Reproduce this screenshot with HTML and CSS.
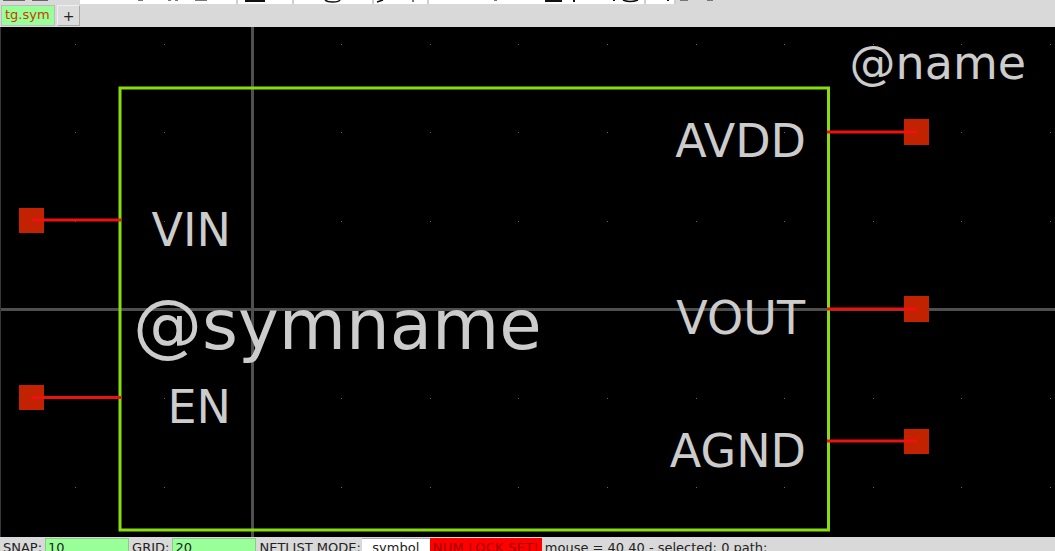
FILE: index.html
```html
<!DOCTYPE html>
<html lang="en">
<head>
    <meta charset="UTF-8">
    <title>xschem - tg.sym</title>
    <link rel="stylesheet" href="styles.css">
</head>
<body>

<div class="toolbar">
    <div class="tool-lead"></div>
    <div class="tool tool-a"></div>
    <div class="tool tool-b"></div>
    <div class="tool tool-c"></div>
    <div class="tool tool-d"></div>
    <div class="tool tool-e"></div>
    <div class="tool tool-f"></div>
    <svg class="tool-icons" width="1055" height="4" viewBox="0 0 1055 4">
        <rect class="ic-grey" x="3" y="0" width="22" height="1"/>
        <rect class="ic-grey" x="32" y="0" width="16" height="1"/>
        <rect class="ic-soft" x="138" y="0" width="5" height="1"/>
        <rect class="ic-soft" x="168" y="0" width="3" height="1"/>
        <rect class="ic-soft" x="175" y="0" width="3" height="1"/>
        <rect class="ic-soft" x="195" y="0" width="12" height="1"/>
        <rect class="ic-dark" x="245" y="0" width="20" height="2"/>
        <path class="ic-line" d="M325 0 Q327 2 333 2 Q339 2 340 0"/>
        <path class="ic-line" d="M377 2 L383 0"/>
        <rect class="ic-soft" x="412" y="0" width="2" height="2"/>
        <rect class="ic-soft" x="494" y="0" width="3" height="1"/>
        <rect class="ic-dark" x="545" y="0" width="17" height="2"/>
        <rect class="ic-dark" x="573" y="0" width="2" height="2"/>
        <rect class="ic-dark" x="613" y="0" width="2" height="1"/>
        <path class="ic-line" d="M623 0 Q630 3 638 0"/>
        <rect class="ic-dark" x="667" y="0" width="2" height="1"/>
        <rect class="ic-soft" x="680" y="0" width="8" height="1"/>
        <rect class="ic-soft" x="707" y="0" width="6" height="1"/>
    </svg>
</div>

<div class="tabbar">
    <span class="tab">tg.sym</span>
    <span class="tab-add">+</span>
</div>

<svg class="canvas" width="1055" height="510" viewBox="0 27 1055 510">
    <g id="dots"></g>

    <line class="axis" x1="252.5" y1="27" x2="252.5" y2="537"/>
    <line class="axis" x1="0" y1="309.5" x2="1055" y2="309.5"/>
    <line class="edge" x1="0.5" y1="27" x2="0.5" y2="537"/>

    <rect class="body" x="120" y="88" width="708.5" height="442"/>

    <rect class="pin" x="19" y="208" width="25" height="25"/>
    <rect class="pin" x="19" y="385" width="25" height="25"/>
    <rect class="pin" x="904" y="119" width="25" height="26"/>
    <rect class="pin" x="904" y="296" width="25" height="26"/>
    <rect class="pin" x="904" y="429" width="25" height="25"/>

    <line class="wire" x1="32" y1="220" x2="121" y2="220"/>
    <line class="wire" x1="32" y1="397.5" x2="121" y2="397.5"/>
    <line class="wire" x1="827" y1="132" x2="917" y2="132"/>
    <line class="wire" x1="827" y1="309" x2="917" y2="309"/>
    <line class="wire" x1="827" y1="441" x2="917" y2="441"/>

    <text class="label" x="1026" y="79" text-anchor="end">@name</text>
    <text class="label" x="806" y="157" text-anchor="end">AVDD</text>
    <text class="label" x="805" y="334" text-anchor="end">VOUT</text>
    <text class="label" x="806" y="467" text-anchor="end">AGND</text>
    <text class="label" x="231" y="246" text-anchor="end">VIN</text>
    <text class="label" x="231" y="423" text-anchor="end">EN</text>
    <text class="label label-big" x="133" y="349">@symname</text>
</svg>

<div class="statusbar">
    <span class="st-label">SNAP:</span>
    <span class="st-input">10</span>
    <span class="st-label">GRID:</span>
    <span class="st-input">20</span>
    <span class="st-label">NETLIST MODE:</span>
    <span class="st-mode">symbol</span>
    <span class="st-warn">NUM LOCK SET!</span>
    <span class="st-label">mouse = 40 40 - selected: 0 path:</span>
</div>

<script>
    // grid dots every 20 units (88.6px), anchored on the origin axes
    var dots = document.getElementById("dots");
    for (var x = 252.5 - 88.6 * 2; x < 1055; x += 88.6) {
        for (var y = 309.5 - 88.6 * 3; y < 537; y += 88.6) {
            var dot = document.createElementNS("http://www.w3.org/2000/svg", "rect");
            dot.setAttribute("x", Math.round(x));
            dot.setAttribute("y", Math.round(y));
            dot.setAttribute("width", 1);
            dot.setAttribute("height", 1);
            dot.setAttribute("class", "dot");
            dots.appendChild(dot);
        }
    }
</script>

</body>
</html>
```

FILE: styles.css
```css
html, body {
    margin: 0;
    height: 100%;
    overflow: hidden;
}
body {
    width: 1055px;
    height: 551px;
    display: flex;
    flex-direction: column;
    background: #d9d9d9;
    font-family: "DejaVu Sans", sans-serif;
    font-size: 13px;
    color: #222;
}

/* toolbar, only the bottom edge of it is on screen */
.toolbar {
    position: relative;
    display: flex;
    height: 4px;
    flex: none;
    background: #d9d9d9;
}
.tool-lead {
    width: 80px;
}
.tool {
    background: #fff;
    border-right: 2px solid #cfcfcf;
    box-sizing: border-box;
}
.tool-a { width: 158px; }
.tool-b { width: 56px; }
.tool-c { width: 80px; }
.tool-d { width: 55px; }
.tool-e { width: 217px; }
.tool-f { width: 30px; }
.tool-icons {
    position: absolute;
    left: 0;
    top: 0;
}
.ic-dark { fill: #111; }
.ic-soft { fill: #777; }
.ic-grey { fill: #666; }
.ic-line {
    fill: none;
    stroke: #111;
    stroke-width: 1.5;
}

.tabbar {
    display: flex;
    align-items: flex-start;
    height: 23px;
    flex: none;
    box-sizing: border-box;
    padding: 1px 0 0 1px;
    gap: 2px;
}
.tab {
    width: 54px;
    height: 21px;
    box-sizing: border-box;
    border: 1px solid #bbb;
    background: #99ff99;
    color: #c83c00;
    padding-left: 3px;
    font-size: 13px;
    line-height: 18px;
}
.tab-add {
    width: 23px;
    height: 21px;
    box-sizing: border-box;
    border: 1px solid #a8a8a8;
    border-top-color: #efefef;
    border-left-color: #efefef;
    background: #dcdcdc;
    text-align: center;
    font-size: 14px;
    line-height: 20px;
}

.canvas {
    display: block;
    flex: none;
    background: #000;
}
.dot { fill: #666; }
.axis {
    stroke: #4f4f4f;
    stroke-width: 3;
}
.edge {
    stroke: #3a3440;
    stroke-width: 1;
}
.body {
    fill: none;
    stroke: #88dd11;
    stroke-width: 3;
}
.pin { fill: #c32200; }
.wire {
    stroke: #ee1111;
    stroke-width: 3;
}
.label {
    fill: #cccccc;
    font-family: "DejaVu Sans", sans-serif;
    font-size: 46px;
}
.label-big { font-size: 69px; }

.statusbar {
    display: flex;
    align-items: flex-start;
    flex: none;
    height: 14px;
    padding: 1px 0 0 3px;
    box-sizing: border-box;
    white-space: nowrap;
    line-height: 16px;
}
.st-label {
    padding-top: 2px;
}
.st-input {
    width: 84px;
    height: 20px;
    margin: 0 3px;
    box-sizing: border-box;
    border: 1px solid #8c8;
    border-bottom: 0;
    background: #99ff99;
    padding: 1px 0 0 2px;
}
.st-mode {
    width: 68px;
    height: 20px;
    margin-left: 1px;
    box-sizing: border-box;
    background: #fff;
    border-top: 1px solid #aaa;
    padding-top: 1px;
    text-align: center;
}
.st-warn {
    width: 112px;
    height: 20px;
    margin-right: 3px;
    background: #ff0000;
    color: #a00000;
    padding-top: 2px;
    box-sizing: border-box;
    text-align: center;
    letter-spacing: 0.25px;
}
```
